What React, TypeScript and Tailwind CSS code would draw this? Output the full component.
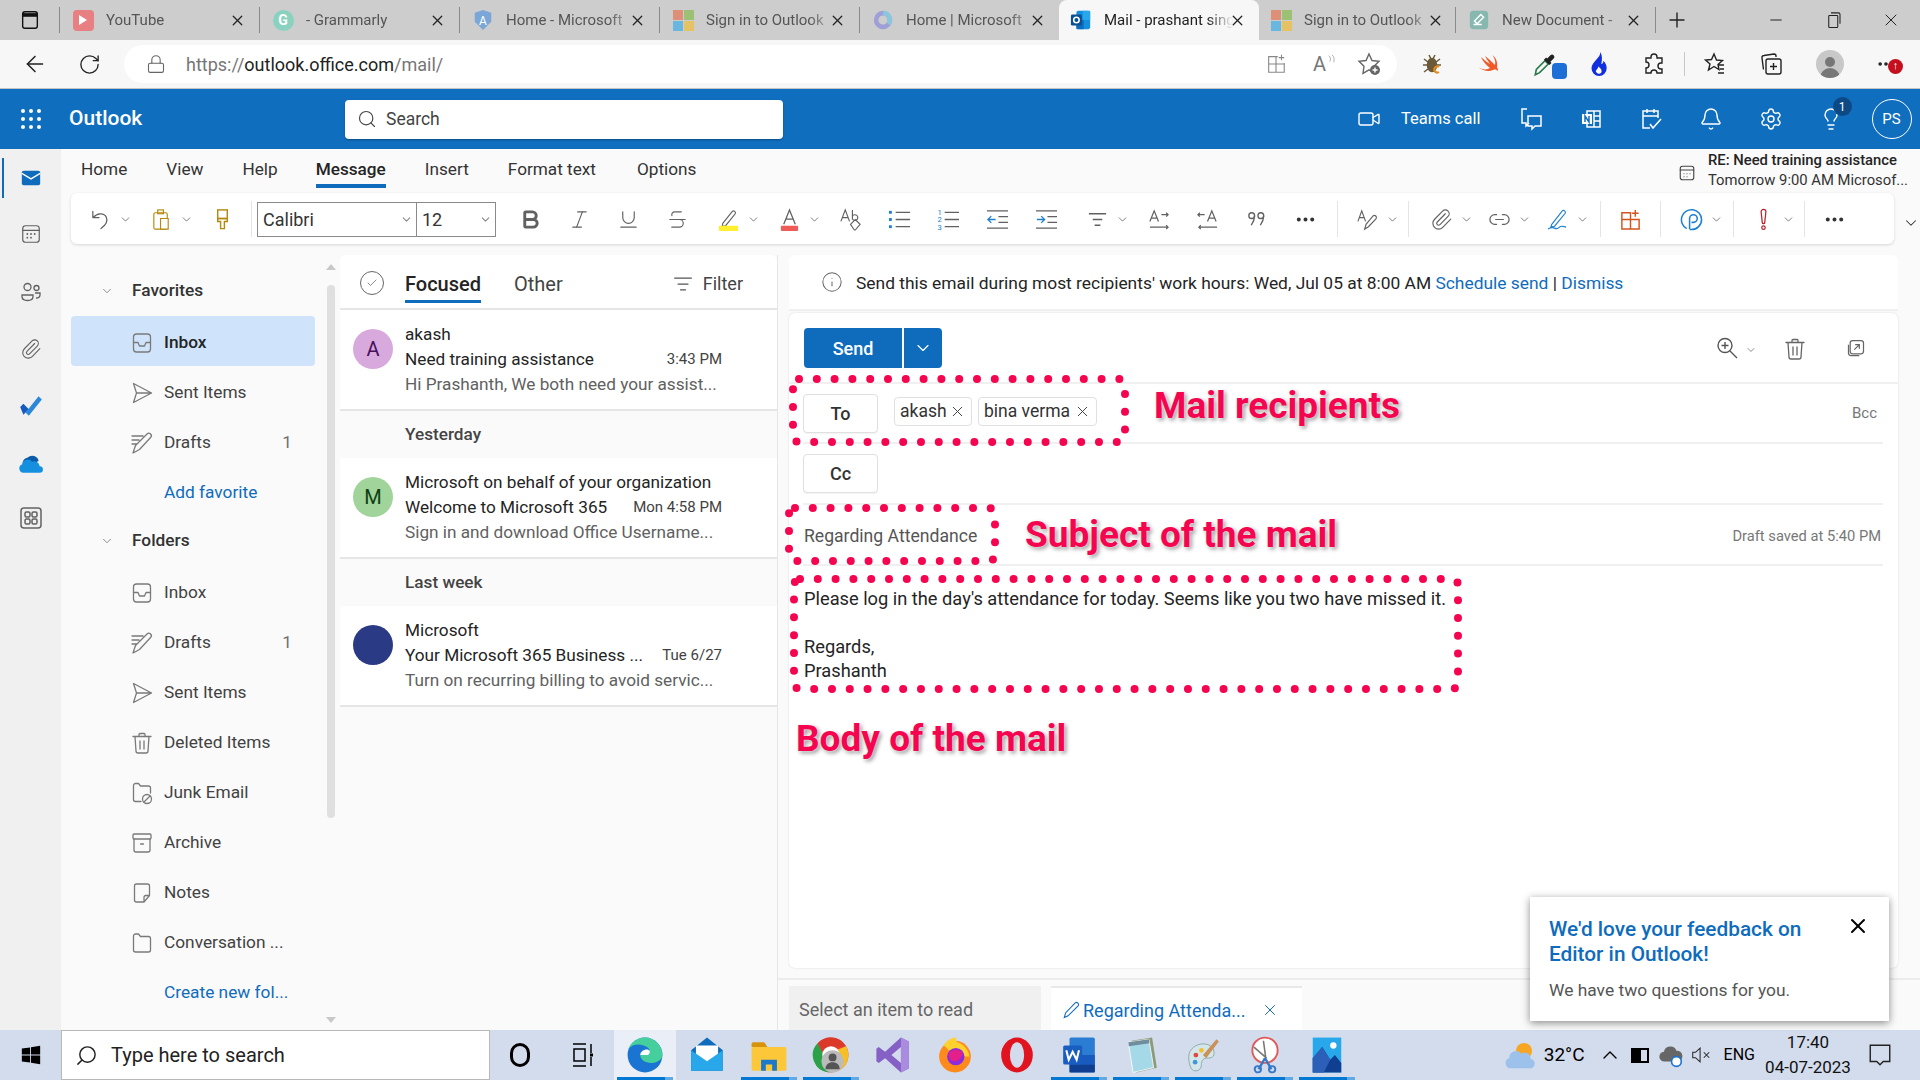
import type { ReactNode } from "react";
import {
  ArrowLeft,
  Bold,
  ChevronDown,
  ChevronUp,
  Ellipsis,
  Info,
  Italic,
  ListFilter,
  Lock,
  Minus,
  Paperclip,
  Plus,
  RotateCw,
  Search,
  Settings,
  Bell,
  Strikethrough,
  Underline,
  Video,
  X,
  Lightbulb,
  Link2,
  Check,
} from "lucide-react";

function Ico({ children, className = "w-6 h-6" }: { children: ReactNode; className?: string }) {
  return (
    <svg
      viewBox="0 0 24 24"
      fill="none"
      stroke="currentColor"
      strokeWidth={1.3}
      strokeLinecap="round"
      strokeLinejoin="round"
      className={className}
    >
      {children}
    </svg>
  );
}

const InboxIco = () => (
  <Ico>
    <rect x="3.5" y="3" width="17" height="18" rx="3" />
    <path d="M3.5 11.5H8l1.5 3.5h5l1.5-3.5h4.5" />
  </Ico>
);
const SendIco = () => (
  <Ico>
    <path d="M3.5 2.5 21.5 12 3.5 21.5 6.5 12ZM6.5 12h15" />
  </Ico>
);
const DraftIco = () => (
  <Ico>
    <path d="M2 5h11M2 9h7M2 13h4M3 22l2.500-7.500L17 3a2.500 2.500 0 0 1 3.600 3.500L9.500 18.500Z" />
  </Ico>
);
const TrashIco = () => (
  <Ico>
    <path d="M3 5.500h18M9 5.500V3.500a1 1 0 0 1 1-1h4a1 1 0 0 1 1 1v2M5 5.500l1 14.500a2 2 0 0 0 2 2h8a2 2 0 0 0 2-2l1-14.500M10 10v8M14 10v8" />
  </Ico>
);
const JunkIco = () => (
  <Ico>
    <path d="M11 20.500H5.500a2 2 0 0 1-2-2V4.500a2 2 0 0 1 2-2h3l2 2.500h8a2 2 0 0 1 2 2v5" />
    <circle cx="17" cy="18" r="4.500" />
    <path d="m14 21 6-6" />
  </Ico>
);
const ArchiveIco = () => (
  <Ico>
    <rect x="3" y="3" width="18" height="5" rx="1" />
    <path d="M4 8v11a2 2 0 0 0 2 2h12a2 2 0 0 0 2-2V8M10.500 13h3" />
  </Ico>
);
const NoteIco = () => (
  <Ico>
    <path d="M14 21H6.500a2 2 0 0 1-2-2V5a2 2 0 0 1 2-2h11a2 2 0 0 1 2 2v9.500ZM14 21v-4.500a2 2 0 0 1 2-2h3.500" />
  </Ico>
);
const FolderIco = () => (
  <Ico>
    <path d="M5.500 21a2 2 0 0 1-2-2V5a2 2 0 0 1 2-2h3l2 2.500h8a2 2 0 0 1 2 2V19a2 2 0 0 1-2 2Z" />
  </Ico>
);

const favorites = [
  { name: "Inbox", icon: <InboxIco />, active: true },
  { name: "Sent Items", icon: <SendIco /> },
  { name: "Drafts", icon: <DraftIco />, count: "1" },
];

const folders = [
  { name: "Inbox", icon: <InboxIco /> },
  { name: "Drafts", icon: <DraftIco />, count: "1" },
  { name: "Sent Items", icon: <SendIco /> },
  { name: "Deleted Items", icon: <TrashIco /> },
  { name: "Junk Email", icon: <JunkIco /> },
  { name: "Archive", icon: <ArchiveIco /> },
  { name: "Notes", icon: <NoteIco /> },
  { name: "Conversation ...", icon: <FolderIco /> },
];

function BrowserTab({
  title,
  icon,
  sep = true,
  active = false,
  width = "w-[200px]",
}: {
  title: string;
  icon: ReactNode;
  sep?: boolean;
  active?: boolean;
  width?: string;
}) {
  return (
    <div
      className={
        active
          ? `relative flex items-center ${width} h-[40px] pl-[11px] bg-[#f7f7f7] rounded-t-lg text-[#222]`
          : `relative flex items-center ${width} h-[40px] ${sep ? "pl-[13px]" : "pl-[11px]"} text-[#555]`
      }
    >
      {sep && <div className="w-px h-[26px] bg-[#8a8a8a] -ml-[13px] mr-[12px]" />}
      <div className="w-[22px] h-[22px] flex items-center justify-center shrink-0">{icon}</div>
      <span className="ml-[12px] w-[129px] -mr-[6px] shrink-0 whitespace-nowrap overflow-hidden text-[15px] [mask-image:linear-gradient(to_right,black_80%,transparent)]">
        {title}
      </span>
      <X className="ml-auto mr-[13px] w-[17px] h-[17px] text-[#222] shrink-0" strokeWidth={1.8} />
    </div>
  );
}

const MsLogo = () => (
  <div className="grid grid-cols-2 gap-px w-[21px] h-[21px] opacity-60">
    <div className="bg-[#e8683f]" />
    <div className="bg-[#7db83a]" />
    <div className="bg-[#28a8ea]" />
    <div className="bg-[#f5bd1f]" />
  </div>
);

const OutlookLogo = () => (
  <svg viewBox="0 0 24 24" className="w-[22px] h-[22px]">
    <rect x="7" y="2" width="15" height="20" rx="2" fill="#1490df" />
    <rect x="14" y="2" width="8" height="10" fill="#28a8ea" />
    <rect x="7" y="12" width="8" height="10" fill="#0f6cbd" />
    <rect x="1" y="6" width="12" height="12" rx="1.500" fill="#0a4f92" />
    <circle cx="7" cy="12" r="3" fill="none" stroke="#fff" strokeWidth="1.700" />
  </svg>
);

function Tool({ children, chevron, className }: { children: ReactNode; chevron?: boolean; className?: string }) {
  return (
    <div className={`flex items-center h-[36px] shrink-0 text-[#616161] ${className ?? (chevron ? "w-[61px]" : "w-[49px]")}`}>
      <div className="w-[49px] flex justify-center shrink-0">{children}</div>
      {chevron && <ChevronDown className="w-[13px] h-[13px] -ml-[6px] text-[#616161] shrink-0" strokeWidth={1.5} />}
    </div>
  );
}

const ToolDivider = ({ className }: { className: string }) => <div className={`w-px h-[36px] bg-[#e4e4e4] shrink-0 ${className}`} />;

function Toolbar() {
  const i = "w-[23px] h-[23px]";
  return (
    <div className="flex items-center h-[51px] ml-[10px] mr-[5px] mt-[2px] pl-[5px] pt-[1px] bg-white rounded-md shadow-[0_1px_3px_rgba(0,0,0,0.15)] w-[1825px]">
      <Tool chevron>
        <svg viewBox="0 0 24 24" fill="none" stroke="#616161" strokeWidth="1.300" strokeLinecap="round" strokeLinejoin="round" className={i}>
          <path d="M4 3.500V10h6.500M4.500 10C8 5.500 15.500 4.500 18 9.500c2.200 5-2 9.500-5.500 12" />
        </svg>
      </Tool>
      <Tool chevron>
        <svg viewBox="0 0 24 24" fill="none" stroke="#b5890f" strokeWidth="1.200" className={i}>
          <rect x="4" y="5" width="14" height="17" rx="1.500" />
          <rect x="8" y="2" width="6" height="4" />
          <path d="M11 11h8v11h-8z" fill="#fff" />
        </svg>
      </Tool>
      <Tool>
        <svg viewBox="0 0 24 24" fill="none" stroke="#b5890f" strokeWidth="1.500" className={i}>
          <rect x="7" y="2" width="10" height="9" />
          <path d="M7 11h10v3h-3v7.500h-4V14H7z" />
        </svg>
      </Tool>
      <ToolDivider className="ml-[4px]" />
      <div className="flex h-[35px] ml-[5px] w-[239px] border border-[#8a8a8a] text-[18px] text-[#333]">
        <div className="flex items-center justify-between w-[159px] pl-[5px] pr-[3px] border-r border-[#8a8a8a]">
          Calibri
          <ChevronDown className="w-[13px] h-[13px] text-[#888]" />
        </div>
        <div className="flex items-center justify-between flex-1 pl-[5px] pr-[3px]">
          12
          <ChevronDown className="w-[13px] h-[13px] text-[#888]" />
        </div>
      </div>
      <div className="w-[10px]" />
      <Tool><Bold className={i} strokeWidth={3} /></Tool>
      <Tool><Italic className={i} strokeWidth={1.2} /></Tool>
      <Tool><Underline className={i} strokeWidth={1.2} /></Tool>
      <Tool><Strikethrough className={i} strokeWidth={1.2} /></Tool>
      <div className="w-[2px]" />
      <Tool chevron>
        <svg viewBox="0 0 24 24" className={i}>
          <path d="M6 16 16 3.500a2 2 0 0 1 3 2.500L9 18.500l-3.500.5Z" fill="none" stroke="#616161" strokeWidth="1.200" />
          <rect x="2" y="18.500" width="20" height="5.500" rx="1" fill="#ffef2e" />
        </svg>
      </Tool>
      <Tool chevron>
        <svg viewBox="0 0 24 24" className={i}>
          <path d="M6 17 12 2l6 15M8.500 11.500h7" fill="none" stroke="#616161" strokeWidth="1.300" />
          <rect x="3" y="18.500" width="18" height="5.500" rx="1" fill="#ee5c58" />
        </svg>
      </Tool>
      <Tool>
        <svg viewBox="0 0 24 24" fill="none" stroke="#616161" strokeWidth="1.200" className={i}>
          <path d="M2 14 6.500 2 11 14M3.500 10h6M14 2v10M14 8.500a3 3 0 1 1 0 3" />
          <path d="m12 17 5-5 5 5-5 6h-1z" />
        </svg>
      </Tool>
      <Tool>
        <svg viewBox="0 0 24 24" className={i}>
          <path d="M8 4.500h15M8 12h15M8 19.500h15" stroke="#616161" strokeWidth="1.400" />
          <rect x="1" y="3" width="3" height="3" fill="#1e80d0" />
          <rect x="1" y="10.500" width="3" height="3" fill="#1e80d0" />
          <rect x="1" y="18" width="3" height="3" fill="#1e80d0" />
        </svg>
      </Tool>
      <Tool>
        <svg viewBox="0 0 24 24" className={i}>
          <path d="M8 4.500h15M8 12h15M8 19.500h15" stroke="#616161" strokeWidth="1.400" />
          <text x="0.500" y="7.500" fontSize="8" fontFamily="Roboto" fill="#1e80d0">1</text>
          <text x="0.500" y="15" fontSize="8" fontFamily="Roboto" fill="#1e80d0">2</text>
          <text x="0.500" y="22.500" fontSize="8" fontFamily="Roboto" fill="#1e80d0">3</text>
        </svg>
      </Tool>
      <Tool>
        <svg viewBox="0 0 24 24" fill="none" className={i}>
          <path d="M1 3h22M13 9h10M13 15h10M1 21h22" stroke="#616161" strokeWidth="1.400" />
          <path d="M10 12H2m3.500-3.500L2 12l3.500 3.500" stroke="#1e80d0" strokeWidth="1.400" />
        </svg>
      </Tool>
      <Tool>
        <svg viewBox="0 0 24 24" fill="none" className={i}>
          <path d="M1 3h22M13 9h10M13 15h10M1 21h22" stroke="#616161" strokeWidth="1.400" />
          <path d="M2 12h8M6.500 8.500 10 12l-3.500 3.500" stroke="#1e80d0" strokeWidth="1.400" />
        </svg>
      </Tool>
      <div className="w-[2px]" />
      <Tool chevron>
        <svg viewBox="0 0 24 24" fill="none" stroke="#616161" strokeWidth="1.400" className={i}>
          <path d="M3 6h18M7 12h10M9 18h6" />
        </svg>
      </Tool>
      <Tool>
        <svg viewBox="0 0 24 24" fill="none" stroke="#616161" strokeWidth="1.300" className={i}>
          <path d="M3 14 7.500 3 12 14M4.500 10.500h6M15 7h7m-2-2 2 2-2 2M3 20h19m-2-2 2 2-2 2" />
        </svg>
      </Tool>
      <Tool>
        <svg viewBox="0 0 24 24" fill="none" stroke="#616161" strokeWidth="1.300" className={i}>
          <path d="M12 14 16.500 3 21 14M13.500 10.500h6M9 7H2m2-2-2 2 2 2M22 20H3m2-2-2 2 2 2" />
        </svg>
      </Tool>
      <Tool>
        <svg viewBox="0 0 24 24" fill="none" stroke="#616161" strokeWidth="1.400" className={i}>
          <circle cx="7" cy="8" r="3" />
          <path d="M10 8c0 4-1.500 7-3.500 10" />
          <circle cx="16.500" cy="8" r="3" />
          <path d="M19.500 8c0 4-1.500 7-3.500 10" />
        </svg>
      </Tool>
      <Tool><Ellipsis className={`${i} text-[#333]`} strokeWidth={2.2} /></Tool>
      <ToolDivider className="ml-[7px]" />
      <div className="w-[5px]" />
      <Tool chevron>
        <svg viewBox="0 0 24 24" fill="none" stroke="#616161" strokeWidth="1.200" className={i}>
          <path d="M2 14 6 3l4 11M3.500 10h5M9 22l1.500-5L18 8a2.200 2.200 0 0 1 3 3l-8 8.500Z" />
        </svg>
      </Tool>
      <ToolDivider className="ml-[4px]" />
      <div className="w-[8px]" />
      <Tool chevron className="w-[58px]"><Paperclip className={i} strokeWidth={1.2} /></Tool>
      <Tool chevron className="w-[58px]"><Link2 className={i} strokeWidth={1.3} /></Tool>
      <Tool chevron className="w-[58px]">
        <svg viewBox="0 0 24 24" fill="none" stroke="#1e80d0" strokeWidth="1.200" className={i}>
          <path d="M6 17 17 3a2 2 0 0 1 3 2.500L9 19l-4 1ZM2 22c3-2 5-2 7-1s3 1 5-1 3-1 7 0" />
        </svg>
      </Tool>
      <ToolDivider className="ml-[9px]" />
      <div className="w-[5px]" />
      <Tool>
        <svg viewBox="0 0 24 24" fill="none" stroke="#d2551f" strokeWidth="1.500" className={i}>
          <path d="M3 5h9v7h9v10H3zM3 12h9v10M17 2v7M13.500 5.500h7" />
        </svg>
      </Tool>
      <ToolDivider className="ml-[5px]" />
      <div className="w-[6px]" />
      <Tool chevron>
        <svg viewBox="0 0 24 24" fill="none" stroke="#1e80d0" strokeWidth="1.600" className={i}>
          <path d="M7 21.500A10.500 10.500 0 1 1 22.500 12 10.500 10.500 0 0 1 12 22.500H10" />
          <path d="M10 22V11a4 4 0 1 1 4 4h-2" />
        </svg>
      </Tool>
      <ToolDivider className="ml-[5px]" />
      <div className="w-[5px]" />
      <Tool chevron>
        <svg viewBox="0 0 24 24" fill="none" stroke="#b8242d" strokeWidth="1.300" className={i}>
          <path d="M9.500 4a2.500 2.500 0 0 1 5 0l-1.200 11a1.300 1.300 0 0 1-2.600 0Z" />
          <circle cx="12" cy="20.500" r="1.800" />
        </svg>
      </Tool>
      <ToolDivider className="ml-[4px]" />
      <div className="w-[5px]" />
      <Tool><Ellipsis className={`${i} text-[#333]`} strokeWidth={2.2} /></Tool>
    </div>
  );
}

function FolderRow({ name, icon, count, active }: { name: string; icon: ReactNode; count?: string; active?: boolean }) {
  return (
    <div
      className={
        active
          ? "flex items-center h-[50px] w-[244px] ml-[10px] pl-[60px] pr-[23px] pt-[3px] rounded bg-[#cfe4fa] text-[#242424] font-medium"
          : "flex items-center h-[50px] w-[244px] ml-[10px] pl-[60px] pr-[23px] pt-[3px] text-[#424242]"
      }
    >
      <div className="w-[24px] h-[24px] -ml-[1px] text-[#7a7a7a] shrink-0">{icon}</div>
      <span className="ml-[10px] whitespace-nowrap">{name}</span>
      {count && <span className="ml-auto text-[#707070]">{count}</span>}
    </div>
  );
}

function SectionRow({ name }: { name: string }) {
  return (
    <div className="flex items-center h-[50px] pl-[39px] text-[#333]">
      <ChevronDown className="w-[14px] h-[14px] text-[#777]" strokeWidth={1.4} />
      <span className="ml-[18px] font-medium">{name}</span>
    </div>
  );
}

function FolderPane() {
  return (
    <div className="relative w-[279px] shrink-0 flex bg-[#fafafa] pt-[16px] text-[17.3px]">
      <div className="flex-1">
        <SectionRow name="Favorites" />
        {favorites.map((f) => (
          <FolderRow key={f.name} {...f} />
        ))}
        <div className="flex items-center h-[50px] pl-[103px] pt-[3px] text-[#0f6cbd]">Add favorite</div>
        <SectionRow name="Folders" />
        {folders.map((f) => (
          <FolderRow key={f.name} {...f} />
        ))}
        <div className="flex items-center h-[50px] pl-[103px] pt-[3px] text-[#0f6cbd]">Create new fol...</div>
      </div>
      <div className="flex flex-col items-center w-[10px] mr-[4px] -mt-[16px]">
        <div className="mt-[14px] w-0 h-0 border-x-[5px] border-x-transparent border-b-[6px] border-b-[#c8c8c8]" />
        <div className="mt-[15px] w-[8px] h-[533px] rounded bg-[#dfdfdf]" />
        <div className="mt-auto mb-[7px] w-0 h-0 border-x-[5px] border-x-transparent border-t-[6px] border-t-[#c8c8c8]" />
      </div>
    </div>
  );
}

const mails = [
  { initial: "A", avatar: "bg-[#d8a9dc] text-[#47105c]", from: "akash", subject: "Need training assistance", time: "3:43 PM", preview: "Hi Prashanth, We both need your assist..." },
  { heading: "Yesterday", initial: "M", avatar: "bg-[#a0d49b] text-[#0c3f10]", from: "Microsoft on behalf of your organization", subject: "Welcome to Microsoft 365", time: "Mon 4:58 PM", preview: "Sign in and download Office Username..." },
  { heading: "Last week", initial: "", avatar: "bg-[#2b3a84] text-white", from: "Microsoft", subject: "Your Microsoft 365 Business ...", time: "Tue 6/27", preview: "Turn on recurring billing to avoid servic..." },
];

function MailList() {
  return (
    <div className="w-[438px] shrink-0 mt-[5px] flex flex-col border-r border-[#e6e6e6]">
      <div className="flex items-center h-[55px] shrink-0 bg-white rounded-t-md border-b-2 border-[#e6e6e6] pl-[20px] pr-[34px] text-[#444] text-[20px]">
        <div className="w-[24px] h-[24px] rounded-full border border-[#666] flex items-center justify-center mt-[2px]">
          <Check className="w-[12px] h-[12px] text-[#666]" strokeWidth={1.5} />
        </div>
        <div className="relative ml-[21px] h-full flex items-center pt-[4px] font-medium text-[#242424]">
          Focused
          <div className="absolute left-0 right-0 bottom-[5px] h-[3px] bg-[#0f6cbd]" />
        </div>
        <span className="ml-[33px] mt-[4px]">Other</span>
        <ListFilter className="ml-auto w-[20px] h-[20px] text-[#555] mt-[4px]" strokeWidth={1.5} />
        <span className="ml-[10px] text-[18px] mt-[4px]">Filter</span>
      </div>
      {mails.map((m) => (
        <div key={m.from}>
          {m.heading && (
            <div className="flex items-center h-[47.5px] pt-[2px] bg-[#fafafa] pl-[65px] text-[17.2px] font-medium text-[#444]">{m.heading}</div>
          )}
          <div className="flex items-center h-[100.5px] pl-[13px] pr-[55px] bg-white border-b-2 border-[#e6e6e6] text-[17.2px] text-[#242424]">
            <div className={`self-start mt-[19px] w-[40px] h-[40px] rounded-full shrink-0 flex items-center justify-center text-[20px] ${m.avatar}`}>{m.initial}</div>
            <div className="ml-[12px] flex-1 min-w-0">
              <div className="h-[25px] leading-[25px] whitespace-nowrap">{m.from}</div>
              <div className="flex justify-between h-[25px] leading-[25px]">
                <span className="whitespace-nowrap">{m.subject}</span>
                <span className="text-[15px] text-[#424242] whitespace-nowrap">{m.time}</span>
              </div>
              <div className="h-[25px] leading-[25px] whitespace-nowrap text-[#616161]">{m.preview}</div>
            </div>
          </div>
        </div>
      ))}
    </div>
  );
}

function RecipientChip({ name, className }: { name: string; className: string }) {
  return (
    <div className={`flex items-center justify-between h-[29px] px-[5px] rounded bg-white border border-[#e0e0e0] text-[17.5px] text-[#333] ${className}`}>
      {name}
      <X className="w-[17px] h-[17px] text-[#444]" strokeWidth={1.4} />
    </div>
  );
}

const FieldButton = ({ label }: { label: string }) => (
  <div className="flex items-center justify-center w-[75px] h-[39px] rounded border border-[#e0e0e0] bg-white shadow-[0_1px_1px_rgba(0,0,0,0.05)] text-[18px] font-medium text-[#333]">
    {label}
  </div>
);

function Compose() {
  return (
    <div className="flex-1 flex flex-col pl-[11px] pr-[22px] pt-[5px] min-w-0">
      <div className="flex items-center h-[56px] shrink-0 bg-white rounded-t-md border-b-2 border-[#f0f0f0] pl-[33px] text-[17.4px] text-[#242424]">
        <Info className="w-[22px] h-[22px] text-[#666] -ml-[1px]" strokeWidth={1.1} />
        <span className="ml-[13px] mt-[2px] whitespace-nowrap">
          Send this email during most recipients' work hours: Wed, Jul 05 at 8:00 AM{" "}
          <span className="text-[#0f6cbd]">Schedule send</span> | <span className="text-[#0f6cbd]">Dismiss</span>
        </span>
      </div>
      <div className="mt-[2px] h-[655px] shrink-0 bg-white rounded-md shadow-[0_0_2px_rgba(0,0,0,0.15)] flex flex-col">
        <div className="flex items-center h-[71px] shrink-0 border-b-2 border-[#f0f0f0] pl-[15px] pr-[32px]">
          <div className="flex items-center justify-center w-[98px] h-[40px] pt-[2px] rounded-l bg-[#0f6cbd] text-white text-[18px] font-medium">Send</div>
          <div className="flex items-center justify-center w-[38px] h-[40px] ml-[2px] rounded-r bg-[#0f6cbd]">
            <ChevronDown className="w-[20px] h-[20px] text-white" strokeWidth={1.4} />
          </div>
          <svg viewBox="0 0 24 24" fill="none" stroke="#555" strokeWidth="1.400" className="ml-auto w-[24px] h-[24px]">
            <circle cx="10" cy="9.500" r="7" />
            <path d="M10 6v7M6.500 9.500h7M15 15l7 7" />
          </svg>
          <ChevronDown className="ml-[6px] w-[12px] h-[12px] text-[#666] mt-[5px]" strokeWidth={1.5} />
          <div className="ml-[26px] w-[22px] h-[22px] text-[#666]"><TrashIco /></div>
          <svg viewBox="0 0 24 24" fill="none" stroke="#666" strokeWidth="1.500" className="ml-[41px] w-[20px] h-[20px]">
            <rect x="5" y="3" width="16" height="16" rx="3" />
            <path d="M3 8v10a3 3 0 0 0 3 3h10M10 14l6-6M11 8h5v5" />
          </svg>
        </div>
        <div className="mx-[14px] mr-[15px]">
          <div className="flex items-center h-[60px] border-b-2 border-[#f0f0f0]">
            <FieldButton label="To" />
            <RecipientChip name="akash" className="ml-[16px] w-[78px] -mt-[4px]" />
            <RecipientChip name="bina verma" className="ml-[6px] w-[119px] -mt-[4px]" />
            <span className="ml-auto mr-[6px] text-[15px] text-[#777]">Bcc</span>
          </div>
          <div className="flex items-center h-[61px] border-b-2 border-[#f0f0f0]">
            <FieldButton label="Cc" />
          </div>
          <div className="flex items-center justify-between h-[61px] border-b-2 border-[#f0f0f0] pl-[1px] text-[#555]">
            <span className="text-[17.6px] mt-[3px]">Regarding Attendance</span>
            <span className="text-[14.7px] text-[#777] mt-[3px] mr-[2px]">Draft saved at 5:40 PM</span>
          </div>
        </div>
        <div className="pl-[15px] pt-[21px] text-[18.25px] leading-[24px] text-[#242424]">
          <p>Please log in the day's attendance for today. Seems like you two have missed it.</p>
          <p className="mt-[24px]">Regards,</p>
          <p>Prashanth</p>
        </div>
      </div>
      <div className="mt-[10px] -ml-[11px] -mr-[22px] flex-1 flex items-end border-t-2 border-[#ececec] pl-[11px]">
        <div className="flex items-center w-[252px] h-[44px] pt-[2px] bg-[#f0f0f0] pl-[10px] text-[18px] text-[#666]">Select an item to read</div>
        <div className="flex items-center w-[251px] h-[44px] pt-[2px] ml-[10px] bg-white border-t-2 border-[#e8e8e8] pl-[10px] text-[18px] text-[#0f6cbd]">
          <svg viewBox="0 0 24 24" fill="none" stroke="#0f6cbd" strokeWidth="1.300" className="w-[20px] h-[20px] shrink-0">
            <path d="M4 21l1.500-5.500L17 3.500a2.500 2.500 0 0 1 3.500 3.500L8.500 19Z" />
          </svg>
          <span className="ml-[2px] whitespace-nowrap">Regarding Attenda...</span>
          <X className="ml-[15px] w-[18px] h-[18px]" strokeWidth={1.3} />
        </div>
      </div>
    </div>
  );
}

// red marker notes drawn over the mail, these sit at fixed spots on the picture
function Annotations() {
  const note = "absolute whitespace-nowrap font-bold text-[37px] leading-none text-[#f5054f] [text-shadow:0_0_3px_#fff,2px_2px_4px_#8a8a8a]";
  const rect = { fill: "none", stroke: "#f5054f", strokeWidth: 8, strokeLinecap: "round" as const, strokeDasharray: "0 17.800" };
  return (
    <>
      <svg className="absolute inset-0 w-[1920px] h-[1080px] pointer-events-none" viewBox="0 0 1920 1080">
        <rect x="793" y="379" width="332" height="63" rx="6" {...rect} />
        <rect x="789" y="508" width="206" height="53" rx="6" {...rect} />
        <rect x="794" y="579" width="664" height="110" rx="6" {...rect} />
      </svg>
      <div className={`${note} left-[1154px] top-[387px]`}>Mail recipients</div>
      <div className={`${note} left-[1025px] top-[516px]`}>Subject of the mail</div>
      <div className={`${note} left-[796px] top-[720px]`}>Body of the mail</div>
    </>
  );
}

function FeedbackPopup() {
  return (
    <div className="absolute left-[1530px] top-[897px] w-[359px] h-[124px] bg-white shadow-[0_2px_8px_rgba(0,0,0,0.45)] pl-[19px] pt-[20px]">
      <p className="text-[20.8px] leading-[25px] font-medium text-[#0f6cbd]">
        We'd love your feedback on
        <br />
        Editor in Outlook!
      </p>
      <p className="mt-[11px] text-[17.4px] leading-[24px] text-[#555]">We have two questions for you.</p>
      <X className="absolute right-[19px] top-[17px] w-[24px] h-[24px] text-black" strokeWidth={2} />
    </div>
  );
}

function TaskIcon({ children, bar = false, active = false }: { children: ReactNode; bar?: boolean; active?: boolean }) {
  return (
    <div className={active ? "relative flex items-center justify-center w-[62px] h-full bg-[#e9eef7]" : "relative flex items-center justify-center w-[62px] h-full"}>
      {children}
      {bar && (
        <div className="absolute bottom-0 left-0 right-0 flex h-[3px] px-[3px]">
          <div className="flex-1 bg-[#0078d4]" />
          <div className="w-[8px] bg-[#61a9e5]" />
        </div>
      )}
    </div>
  );
}

function Taskbar() {
  const s = "w-[38px] h-[38px]";
  return (
    <div className="flex items-center h-[50px] shrink-0 bg-[#d3dcec] text-black">
      <div className="flex items-center justify-center w-[61px]">
        <svg viewBox="0 0 24 24" className="w-[22px] h-[22px]" fill="#000">
          <path d="M2 5l9-1.300V11.500H2zM12 3.500 22 2v9.500H12zM2 12.500h9v7.800L2 19zM12 12.500h10V22l-10-1.500z" />
        </svg>
      </div>
      <div className="flex items-center w-[429px] h-full bg-white border border-[#b8b8b8] pl-[13px] text-[20px] text-[#222]">
        <Search className="w-[23px] h-[23px] -scale-x-100" strokeWidth={1.5} />
        <span className="ml-[13px]">Type here to search</span>
      </div>
      <div className="flex items-center justify-center w-[60px]">
        <div className="w-[20px] h-[24px] rounded-full border-[3px] border-black" />
      </div>
      <div className="flex items-center justify-center w-[64px]">
        <svg viewBox="0 0 24 24" fill="none" stroke="#000" strokeWidth="1.500" className="w-[24px] h-[26px]">
          <path d="M3 1h13M3 23h13M4 6h11v12H4zM21 1v9M21 14v9" />
          <rect x="20" y="10.500" width="3" height="3" fill="#000" stroke="none" />
        </svg>
      </div>
      <TaskIcon bar active>
        <svg viewBox="0 0 24 24" className={s}>
          <circle cx="12" cy="12" r="11" fill="#1a74d2" />
          <path d="M23 12c0-6-5-11-11-11C7 1 3 4 1.500 8.500 4 5 8 5 11 6c4 1 5 4 3 6h-5c0 3 3 5 7 5 2.500 0 5-1 6.500-3 .300-.700.500-1.300.500-2Z" fill="#45cf9c" />
          <path d="M9 12c0-2 2-3.500 4-3.500s3 1.500 1 3.500Z" fill="#fff" />
        </svg>
      </TaskIcon>
      <TaskIcon>
        <svg viewBox="0 0 24 24" className={s}>
          <path d="M2 9 12 1l10 8v13H2z" fill="#0f6cbd" />
          <path d="M5 6h14v8l-7 4-7-4z" fill="#fff" />
          <path d="M2 9l10 7 10-7v13H2z" fill="#28a8ea" />
        </svg>
      </TaskIcon>
      <TaskIcon bar>
        <svg viewBox="0 0 24 24" className={s}>
          <path d="M1 5a1 1 0 0 1 1-1h7l2 3H1z" fill="#d8930c" />
          <rect x="1" y="7" width="22" height="15" rx="1" fill="#fcc83a" />
          <path d="M7 22v-7h10v7h-3v-4h-4v4z" fill="#1d78c9" />
        </svg>
      </TaskIcon>
      <TaskIcon bar>
        <svg viewBox="0 0 24 24" className={s}>
          <circle cx="12" cy="12" r="11" fill="#e23d2e" />
          <path d="M12 1a11 11 0 0 1 9.500 5.500H12a5.500 5.500 0 0 0-5 3L3.500 4.500A11 11 0 0 1 12 1Z" fill="#db3a2b" />
          <path d="M21.500 6.500A11 11 0 0 1 12 23l4.700-8.500a5.500 5.500 0 0 0-.400-6Z" fill="#f6c025" />
          <path d="M3.500 4.500 8 13a5 5 0 0 0 5 4l-2.500 6A11 11 0 0 1 3.500 4.500Z" fill="#2ca14a" />
          <circle cx="12" cy="12" r="5.500" fill="#fff" />
          <circle cx="13" cy="16" r="7" fill="#bbb" />
          <circle cx="13" cy="13.500" r="2.500" fill="#555" />
          <path d="M8.500 21c0-3 2-4.500 4.500-4.500s4.500 1.500 4.500 4.500Z" fill="#555" />
        </svg>
      </TaskIcon>
      <TaskIcon>
        <svg viewBox="0 0 24 24" className={s}>
          <path d="M17 1l5 2.500v17L17 23 7 14l-4 3-1.500-1V8L3 7l4 3z" fill="#8661c5" />
          <path d="M17 7v10l-6-5z" fill="#d3dcec" />
          <path d="M17 1l5 2.500v17L17 23z" fill="#a98ce0" />
        </svg>
      </TaskIcon>
      <TaskIcon>
        <svg viewBox="0 0 24 24" className={s}>
          <circle cx="12" cy="13" r="10" fill="#ff8a1c" />
          <path d="M5 6c1-3 5-5 8-5-1 2 0 3 3 4 3 2 5 5 5 8H12z" fill="#ffd12e" />
          <circle cx="12.500" cy="13" r="5.500" fill="#8a2be2" />
          <path d="M8 11c2-3 7-3 9 0-1 3-3 5-5 5-3 0-4-2-4-5Z" fill="#e3208a" />
        </svg>
      </TaskIcon>
      <TaskIcon>
        <svg viewBox="0 0 24 24" className={s}>
          <ellipse cx="12" cy="12" rx="10" ry="11" fill="#e0131e" />
          <ellipse cx="12" cy="12" rx="4.500" ry="8" fill="#d3dcec" />
        </svg>
      </TaskIcon>
      <TaskIcon bar>
        <svg viewBox="0 0 24 24" className={s}>
          <rect x="6" y="1" width="16" height="22" rx="1" fill="#2b7cd3" />
          <rect x="6" y="12" width="16" height="6" fill="#185abd" />
          <rect x="6" y="18" width="16" height="5" fill="#103f91" />
          <rect x="2" y="6" width="12" height="12" rx="1" fill="#1a5dc1" />
          <path d="M4 9l1.500 6L8 10l2.500 5L12 9" fill="none" stroke="#fff" strokeWidth="1.300" />
        </svg>
      </TaskIcon>
      <TaskIcon bar>
        <svg viewBox="0 0 24 24" className={s}>
          <path d="M6 3 19 1l3 19-13 3Z" fill="#8d9a78" />
          <path d="M4 4l13-2 3 18-13 3Z" fill="#a5d9e8" stroke="#fff" strokeWidth=".5" />
          <path d="M4 4l13-2 .300 2.500-13 2Z" fill="#6f8d9c" />
        </svg>
      </TaskIcon>
      <TaskIcon bar>
        <svg viewBox="0 0 24 24" className={s}>
          <path d="M3 13c0-5 5-8 9-8 5 0 7 3 7 6s-3 3-5 3-3 2-3 4-1 4-4 4-4-5-4-9Z" fill="#d5e6ea" stroke="#8aa" strokeWidth=".6" />
          <circle cx="7.500" cy="12" r="1.500" fill="#e04a3c" />
          <circle cx="11" cy="9" r="1.500" fill="#f2c02f" />
          <circle cx="7" cy="16.500" r="1.500" fill="#3d9ad9" />
          <path d="M12 12 20.500 2l1.500 1.500L14 14Z" fill="#c8925a" />
        </svg>
      </TaskIcon>
      <TaskIcon bar>
        <svg viewBox="0 0 24 24" className={s}>
          <circle cx="12" cy="9" r="8" fill="#fff" stroke="#e05a5a" strokeWidth="1.200" />
          <path d="M11 3l1.500 11M5 7l8 7" stroke="#777" strokeWidth="1" />
          <path d="M12 14 8 21M12 14l4 7" stroke="#3578c9" strokeWidth="1.500" />
          <circle cx="7.500" cy="21" r="2" fill="none" stroke="#3578c9" strokeWidth="1.200" />
          <circle cx="16.500" cy="21" r="2" fill="none" stroke="#3578c9" strokeWidth="1.200" />
        </svg>
      </TaskIcon>
      <TaskIcon bar>
        <svg viewBox="0 0 24 24" className={s}>
          <rect x="3" y="1" width="18" height="22" fill="#28a8ea" />
          <circle cx="16" cy="6" r="2" fill="#fff" />
          <path d="M3 23V14l6-7 5 8 3-3 4 5v6z" fill="#103f91" />
          <path d="M9 7l5 8-4 8H3v-9z" fill="#2b5fb8" />
        </svg>
      </TaskIcon>
      <div className="ml-auto flex items-center h-full">
        <svg viewBox="0 0 24 24" className="w-[32px] h-[32px]">
          <circle cx="15" cy="9" r="6" fill="#f6a623" />
          <path d="M5 22a4 4 0 0 1-1-7.800A5 5 0 0 1 13 11a4.500 4.500 0 0 1 7 4 3.500 3.500 0 0 1-1 7Z" fill="#9cc2ec" />
        </svg>
        <span className="ml-[8px] text-[19px]">32°C</span>
        <ChevronUp className="ml-[13px] w-[24px] h-[24px]" strokeWidth={1.4} />
        <div className="ml-[9px] w-[18px] h-[15px] border-2 border-black flex">
          <div className="w-[8px] bg-black" />
        </div>
        <svg viewBox="0 0 24 24" className="ml-[9px] w-[26px] h-[26px]">
          <path d="M6 18a4.500 4.500 0 0 1-.500-9A6 6 0 0 1 17 8a5 5 0 0 1 1 10Z" fill="#666" />
          <circle cx="17" cy="18" r="4.500" fill="#fff" stroke="#1a74d2" strokeWidth="1.500" />
        </svg>
        <svg viewBox="0 0 24 24" fill="none" stroke="#222" strokeWidth="1.100" className="ml-[6px] w-[22px] h-[22px]">
          <path d="M3 9v6h3l5 4.500v-15L6 9ZM15 9l6 6M21 9l-6 6" />
        </svg>
        <span className="ml-[12px] text-[16px]">ENG</span>
        <div className="w-[106px] text-center text-[17px] leading-[25px] text-[#111]">
          17:40
          <br />
          04-07-2023
        </div>
        <svg viewBox="0 0 24 24" fill="none" stroke="#222" strokeWidth="1.300" className="ml-[6px] mr-[27px] w-[26px] h-[28px]">
          <path d="M3 3h18v15h-6l-3 3-3-3H3z" />
        </svg>
      </div>
    </div>
  );
}

export default function App() {
  return (
    <div className="relative w-[1920px] h-[1080px] overflow-hidden flex flex-col bg-[#fafafa] font-['Roboto',sans-serif]">
      {/* Browser tabs */}
      <div className="flex items-center h-[40px] shrink-0 bg-[#cdcdcd]">
        <div className="flex justify-center w-[59px]">
          <svg viewBox="0 0 24 24" fill="none" stroke="#111" strokeWidth="1.500" className="w-[22px] h-[22px]">
            <rect x="4" y="3" width="16" height="18" rx="2.500" />
            <path d="M4 6.500h16" strokeWidth="4" />
          </svg>
        </div>
        <BrowserTab
          title="YouTube"
          icon={
            <div className="flex items-center justify-center w-[21px] h-[21px] rounded bg-[#e77f83]">
              <div className="w-0 h-0 border-y-[5px] border-y-transparent border-l-[8px] border-l-white" />
            </div>
          }
        />
        <BrowserTab
          title="- Grammarly"
          icon={<div className="flex items-center justify-center w-[21px] h-[21px] rounded-full bg-[#8ad2bf] text-white text-[14px] font-bold">G</div>}
        />
        <BrowserTab
          title="Home - Microsoft"
          icon={
            <svg viewBox="0 0 24 24" className="w-[22px] h-[22px]">
              <path d="M12 1l9 3v10l-9 9-9-9V4z" fill="#7ba7d8" />
              <text x="7.500" y="17" fontSize="13" fill="#fff" fontFamily="Roboto">A</text>
            </svg>
          }
        />
        <BrowserTab title="Sign in to Outlook" icon={<MsLogo />} />
        <BrowserTab
          title="Home | Microsoft"
          icon={
            <svg viewBox="0 0 24 24" className="w-[22px] h-[22px]">
              <circle cx="12" cy="12" r="7.500" fill="none" stroke="#9f9fd8" strokeWidth="5" />
              <path d="M12 4.500a7.500 7.500 0 0 1 6 12" fill="none" stroke="#8ac6dd" strokeWidth="5" />
            </svg>
          }
        />
        <BrowserTab title="Mail - prashant singh" icon={<OutlookLogo />} sep={false} active />
        <BrowserTab title="Sign in to Outlook" icon={<MsLogo />} sep={false} width="w-[196px]" />
        <BrowserTab
          title="New Document -"
          icon={
            <svg viewBox="0 0 24 24" className="w-[22px] h-[22px]">
              <rect x="2" y="2" width="20" height="20" rx="4" fill="#86b8b0" />
              <path d="M7 13l7-7 3 3-7 7zM6 17h9" stroke="#fff" strokeWidth="1.600" fill="none" />
            </svg>
          }
        />
        <div className="w-px h-[26px] bg-[#8a8a8a]" />
        <Plus className="ml-[9px] w-[24px] h-[24px] text-[#222]" strokeWidth={1.4} />
        <Minus className="ml-[78px] w-[18px] h-[18px] text-[#222]" strokeWidth={1.3} />
        <svg viewBox="0 0 24 24" fill="none" stroke="#222" strokeWidth="1.400" className="ml-[40px] w-[18px] h-[18px]">
          <rect x="5" y="6" width="12" height="16" rx="1" />
          <path d="M8 2.500h10a2 2 0 0 1 2 2V17" />
        </svg>
        <X className="ml-[38px] w-[20px] h-[20px] text-[#222]" strokeWidth={1.2} />
      </div>

      {/* Address bar */}
      <div className="flex items-center h-[49px] shrink-0 bg-[#f7f7f7] border-b border-[#c4c4c4] text-[#222]">
        <ArrowLeft className="ml-[22px] w-[26px] h-[26px]" strokeWidth={1.4} />
        <RotateCw className="ml-[30px] w-[23px] h-[23px]" strokeWidth={1.4} />
        <div className="ml-[23px] flex items-center w-[1273px] h-[38px] rounded-full bg-white">
          <Lock className="ml-[22px] w-[20px] h-[20px] text-[#666]" strokeWidth={1.3} />
          <span className="ml-[20px] text-[18px] text-[#767676]">
            https://<span className="text-[#222]">outlook.office.com</span>/mail/
          </span>
          <div className="ml-auto flex items-center text-[#888]">
            <svg viewBox="0 0 24 24" fill="none" stroke="currentColor" strokeWidth="1.200" className="w-[22px] h-[22px]">
              <path d="M14 4H4v17h17V11M4 12h17M12 4v17M18 2v6M15 5h6" />
            </svg>
            <span className="ml-[26px] w-[14px] text-[20px] leading-none text-[#777]">A</span>
            <svg viewBox="0 0 24 24" fill="none" stroke="#777" strokeWidth="1.400" className="w-[10px] h-[12px] -mt-[10px]">
              <path d="M4 4c5 3 5 9 3 14M12 2c6 5 6 12 4 18" />
            </svg>
            <svg viewBox="0 0 24 24" fill="none" stroke="#666" strokeWidth="1.400" className="ml-[20px] mr-[16px] w-[24px] h-[24px]">
              <path d="M12 2l3 6.500 7 .8-5 5 1 7-6-3.500-6 3.500 1-7-5-5 7-.8z" />
              <circle cx="18" cy="18" r="5" fill="#666" stroke="none" />
              <path d="M18 15.500v5M15.500 18h5" stroke="#fff" />
            </svg>
          </div>
        </div>
        <svg viewBox="0 0 24 24" className="ml-[23px] w-[24px] h-[24px]" fill="none" stroke="#6b5a3a" strokeWidth="1.500">
          <path d="M4 7l4 3M20 7l-4 3M3 13h4M21 13h-4M4 20l4-3M9 3l2 4M15 3l-2 4" />
          <ellipse cx="12" cy="13" rx="4.500" ry="6.500" fill="#6b5a3a" />
          <path d="M19 15a3 3 0 1 0 0 5" stroke="#e58b17" strokeWidth="2" />
        </svg>
        <svg viewBox="0 0 24 24" className="ml-[32px] w-[24px] h-[24px]">
          <path d="M2 15C6 18 11 18 14 16c-4-3-8-8-9-11 3 3 6 5 9 7-2-3-4-6-5-8 4 3 7 6 10 9 1-4-1-8-3-10 4 2 6 8 5 12 1 2 1 3 1 4-1-1-3-2-5-1-4 2-10 1-15-3Z" fill="#f05a28" />
        </svg>
        <svg viewBox="0 0 24 24" className="ml-[32px] w-[26px] h-[26px]">
          <path d="M3 22l1-5 8-8 3 3-8 8Z" fill="none" stroke="#2a7a4b" strokeWidth="1.500" />
          <path d="M11 8l5 5 2-2-1-1 3-3a2 2 0 0 0-3-3l-3 3-1-1Z" fill="#222" />
        </svg>
        <div className="-ml-[6px] mt-[14px] w-[15px] h-[16px] bg-[#1d6fd6] rounded-sm" />
        <svg viewBox="0 0 24 24" className="ml-[18px] w-[26px] h-[26px]">
          <path d="M14 1c1 5-8 9-8 15a7 7 0 0 0 14 0c0-3-1-5-3-7 0 2-1 3-2 3 1-4 1-8-1-11Z" fill="#1030e0" />
          <path d="M12 14c1 2-2 3-2 5a3 3 0 0 0 5 1c1-2 0-4-3-6Z" fill="#fff" />
        </svg>
        <svg viewBox="0 0 24 24" fill="none" stroke="#222" strokeWidth="1.400" className="ml-[31px] w-[24px] h-[24px]">
          <path d="M9 5a3 3 0 0 1 6 0v1h5v5h-1a3 3 0 0 0 0 6h1v4h-5a3 3 0 0 0-6 0H4v-5a3 3 0 0 0 0-6V6h5Z" />
        </svg>
        <div className="ml-[18px] w-px h-[24px] bg-[#c8c8c8]" />
        <svg viewBox="0 0 24 24" fill="none" stroke="#222" strokeWidth="1.400" className="ml-[18px] w-[24px] h-[24px]">
          <path d="M11 2l2.500 6 6 .5-4.500 4 1 5-5-3-5.500 3.500 1.500-6-4.500-4 6-.5zM15 13h6M17 17h4M15 21h6" />
        </svg>
        <svg viewBox="0 0 24 24" fill="none" stroke="#222" strokeWidth="1.400" className="ml-[32px] w-[24px] h-[24px]">
          <rect x="7" y="7" width="15" height="15" rx="2" />
          <path d="M14.500 11v7M11 14.500h7M4.500 17.500 3 6a2 2 0 0 1 2-2.500L15 2a2 2 0 0 1 2 2v1" />
        </svg>
        <div className="ml-[33px] w-[28px] h-[28px] rounded-full bg-[#c8c8c8] flex items-center justify-center overflow-hidden">
          <div className="flex flex-col items-center mt-[6px]">
            <div className="w-[10px] h-[10px] rounded-full bg-[#777]" />
            <div className="w-[20px] h-[10px] rounded-t-full bg-[#777] mt-px" />
          </div>
        </div>
        <div className="relative ml-[32px]">
          <Ellipsis className="w-[20px] h-[20px] text-[#222]" strokeWidth={2.4} />
          <div className="absolute -right-[7px] top-[5px] flex items-center justify-center w-[15px] h-[15px] rounded-full bg-[#c50f1f] text-white text-[11px] font-bold">↑</div>
        </div>
      </div>

      {/* Outlook header */}
      <div className="flex items-center h-[60px] shrink-0 bg-[#106ebe] text-white">
        <div className="grid grid-cols-3 gap-[4px] ml-[21px]">
          {Array.from({ length: 9 }).map((_, i) => (
            <div key={i} className="w-[4px] h-[4px] rounded-full bg-white" />
          ))}
        </div>
        <span className="ml-[28px] text-[21px] font-medium w-[80px]">Outlook</span>
        <div className="ml-[196px] flex items-center w-[438px] h-[39px] rounded bg-white text-[#444] text-[17.5px] shadow-[0_1px_2px_rgba(0,0,0,0.3)]">
          <Search className="ml-[12px] w-[20px] h-[20px]" strokeWidth={1.4} />
          <span className="ml-[9px]">Search</span>
        </div>
        <Video className="ml-[574px] w-[24px] h-[24px]" strokeWidth={1.4} />
        <span className="ml-[20px] text-[16.5px]">Teams call</span>
        <svg viewBox="0 0 24 24" fill="none" stroke="#fff" strokeWidth="1.500" className="ml-[38px] w-[24px] h-[24px]">
          <path d="M8 2H3v14h4v3l3-3M9 9h13v10h-6l-3 3v-3H9z" />
        </svg>
        <svg viewBox="0 0 24 24" fill="none" stroke="#fff" strokeWidth="1.500" className="ml-[36px] w-[24px] h-[24px]">
          <path d="M8 4h13v16H8zM15 4v16M15 9h6M15 14h6" />
          <rect x="3" y="7" width="10" height="10" fill="#fff" stroke="none" />
          <path d="M6 15V9l4 6V9" stroke="#106ebe" />
        </svg>
        <svg viewBox="0 0 24 24" fill="none" stroke="#fff" strokeWidth="1.500" className="ml-[36px] w-[24px] h-[24px]">
          <path d="M11 21H4V4h15v7M8 2v4M15 2v4M4 9h15M11 17l3 4 8-9" />
        </svg>
        <Bell className="ml-[36px] w-[24px] h-[24px]" strokeWidth={1.4} />
        <Settings className="ml-[36px] w-[24px] h-[24px]" strokeWidth={1.4} />
        <div className="relative ml-[36px]">
          <Lightbulb className="w-[24px] h-[24px]" strokeWidth={1.4} />
          <div className="absolute -right-[9px] -top-[10px] flex items-center justify-center w-[19px] h-[19px] rounded-full bg-[#0d4a85] text-[12px]">1</div>
        </div>
        <div className="ml-[29px] flex items-center justify-center w-[40px] h-[40px] rounded-full border border-white text-[15px]">PS</div>
      </div>

      {/* Left rail and everything beside it */}
      <div className="flex flex-1 min-h-0">
        <div className="flex flex-col items-center w-[61px] shrink-0 bg-[#f0f0f0] text-[#616161]">
          <div className="relative flex items-center justify-center w-full h-[56px] pt-[2px]">
            <div className="absolute left-[2px] top-[9px] w-[2px] h-[40px] bg-[#0f6cbd]" />
            <svg viewBox="0 0 24 24" className="w-[22px] h-[22px]">
              <path d="M2 6a2 2 0 0 1 2-2h16a2 2 0 0 1 2 2v12a2 2 0 0 1-2 2H4a2 2 0 0 1-2-2Z" fill="#0f6cbd" />
              <path d="M2 7l10 6 10-6" fill="none" stroke="#fff" strokeWidth="1.400" />
            </svg>
          </div>
          <div className="flex items-center justify-center h-[58px]">
            <svg viewBox="0 0 24 24" fill="none" stroke="#616161" strokeWidth="1.300" strokeLinecap="round" className="w-[22px] h-[22px]">
              <rect x="3" y="3" width="18" height="18" rx="3" />
              <path d="M3 8h18" />
              <path d="M8 12h.01M12 12h.01M16 12h.01M8 16h.01M12 16h.01" strokeWidth="2" />
            </svg>
          </div>
          <div className="flex items-center justify-center h-[57px]">
            <svg viewBox="0 0 24 24" fill="none" stroke="#616161" strokeWidth="1.300" className="w-[24px] h-[24px]">
              <circle cx="8.500" cy="7" r="3.500" />
              <circle cx="17.500" cy="8" r="2.500" />
              <path d="M3 15h11v1.500c0 2.500-2.500 4-5.500 4S3 19 3 16.500ZM16 13h5v2c0 2-2 3-4 3" />
            </svg>
          </div>
          <div className="flex items-center justify-center h-[57px]">
            <Paperclip className="w-[22px] h-[22px]" strokeWidth={1.2} />
          </div>
          <div className="flex items-center justify-center h-[57px]">
            <svg viewBox="0 0 24 24" className="w-[26px] h-[26px]">
              <path d="M2 13l3-3 5 5-3 3-2 2z" fill="#185abd" />
              <path d="M10 21 7 18 19 3l3 3z" fill="#2b88d8" />
            </svg>
          </div>
          <div className="flex items-center justify-center h-[60px]">
            <svg viewBox="0 0 24 24" className="w-[26px] h-[26px]">
              <path d="M7 17a6 6 0 0 1 2-11 6 6 0 0 1 10 3z" fill="#0a5ca8" />
              <path d="M5 20a4 4 0 0 1-1-7.800 5 5 0 0 1 9-2.200 5 5 0 0 1 7 4 3 3 0 0 1 0 6z" fill="#1490df" />
            </svg>
          </div>
          <div className="flex items-center justify-center h-[48px]">
            <svg viewBox="0 0 24 24" fill="none" stroke="#616161" strokeWidth="1.500" className="w-[24px] h-[24px]">
              <rect x="2" y="2" width="20" height="20" rx="3" />
              <rect x="6" y="6" width="5" height="5" rx="1.500" />
              <rect x="13" y="6" width="5" height="5" rx="1.500" />
              <rect x="6" y="13" width="5" height="5" rx="1.500" />
              <rect x="13" y="13" width="5" height="5" rx="1.500" />
            </svg>
          </div>
        </div>

        <div className="flex-1 min-w-0 flex flex-col">
          {/* Ribbon */}
          <div className="h-[101px] shrink-0">
            <div className="flex items-center h-[42px] pl-[20px] text-[17.2px] text-[#333]">
              <span>Home</span>
              <span className="ml-[39px]">View</span>
              <span className="ml-[39px]">Help</span>
              <span className="relative ml-[38px] font-medium text-[#242424]">
                Message
                <span className="absolute left-0 right-0 -bottom-[5px] h-[4px] bg-[#0f6cbd]" />
              </span>
              <span className="ml-[39px]">Insert</span>
              <span className="ml-[39px]">Format text</span>
              <span className="ml-[41px]">Options</span>
              <div className="ml-auto mr-[21px] flex items-center">
                <svg viewBox="0 0 24 24" fill="none" stroke="#444" strokeWidth="1.500" strokeLinecap="round" className="w-[18px] h-[18px] mt-[6px]">
                  <rect x="3" y="3" width="18" height="18" rx="3" />
                  <path d="M3 8h18M8 13h.01M12 13h.01M16 13h.01M8 17h.01M12 17h.01" />
                </svg>
                <div className="ml-[12px] w-[191px] text-[14.8px] leading-[20px] text-[#333] whitespace-nowrap">
                  <div className="font-medium text-[#242424]">RE: Need training assistance</div>
                  <div>Tomorrow 9:00 AM Microsof...</div>
                </div>
              </div>
            </div>
            <div className="flex items-center">
              <Toolbar />
              <ChevronDown className="ml-[3px] mt-[10px] w-[18px] h-[18px] text-[#333]" strokeWidth={1.4} />
            </div>
          </div>

          {/* Panes */}
          <div className="flex flex-1 min-h-0">
            <FolderPane />
            <MailList />
            <Compose />
          </div>
        </div>
      </div>

      <Taskbar />
      <Annotations />
      <FeedbackPopup />
    </div>
  );
}
